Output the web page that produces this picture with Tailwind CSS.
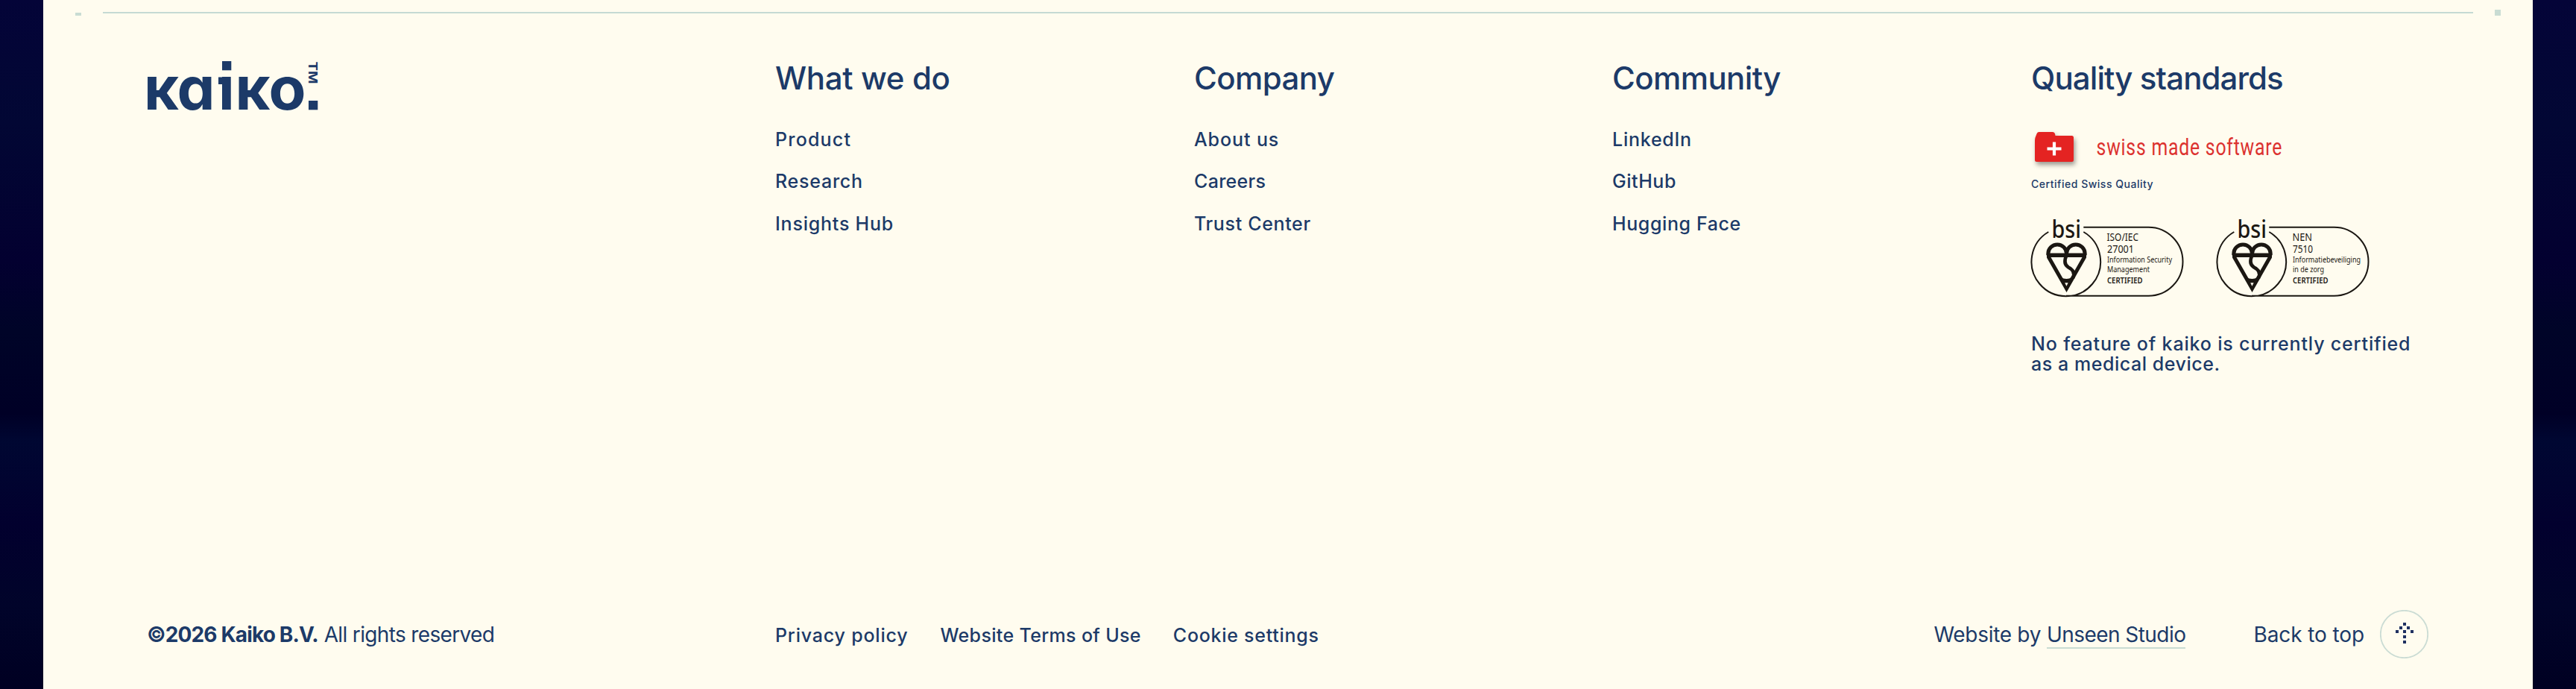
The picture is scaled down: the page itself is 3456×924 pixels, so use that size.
<!DOCTYPE html>
<html lang="en">
<head>
<meta charset="utf-8">
<title>Kaiko</title>
<script src="https://cdn.jsdelivr.net/npm/@tailwindcss/browser@4"></script>
</head>
<body class="h-[924px] w-[3456px] overflow-hidden bg-[linear-gradient(#040438_0%,#020734_18%,#030030_38%,#000428_48%,#000026_60%,#000732_64%,#02002e_76%,#01042a_88%,#000022_100%)] px-[58px] font-['Inter',sans-serif] text-[#1c3a68]">
<footer class="flex h-[924px] flex-col bg-[#fffcef]">
  <div class="flex h-[81px] shrink-0 items-start justify-between pt-[13px] pr-[43px] pl-[43px]">
    <span class="mt-1 h-1 w-2 bg-[#c9dcd3]"></span>
    <span class="mt-[3px] h-[2px] w-[3180px] bg-[#c5dad3]"></span>
    <span class="size-2 bg-[#c9dcd3]"></span>
  </div>

  <div class="grid h-[737px] shrink-0 grid-cols-[842px_562px_561px_562px_1fr] pl-[140px]">
    <div>
      <svg class="block h-[68px] w-[232px] overflow-visible" viewBox="0 0 232 68" fill="#1c3a68" role="img" aria-label="kaiko">
        <g class="text-[80px] font-bold [font-feature-settings:'cv11']">
          <text x="-5" y="66" textLength="47" lengthAdjust="spacingAndGlyphs">к</text>
          <text x="39.500" y="66" textLength="51" lengthAdjust="spacingAndGlyphs">a</text>
          <text x="95" y="66">ı</text>
          <text x="117.500" y="66" textLength="47" lengthAdjust="spacingAndGlyphs">к</text>
          <text x="162.500" y="66" textLength="50" lengthAdjust="spacingAndGlyphs">o</text>
        </g>
        <rect x="100" y="1" width="12.300" height="12.300"/>
        <rect x="95" y="22.500" width="8" height="9.500"/>
        <rect x="216" y="54" width="12.300" height="12.300"/>
        <text class="text-[16.500px] font-bold" transform="translate(216.300 1.500) rotate(90)" textLength="30" lengthAdjust="spacingAndGlyphs">TM</text>
      </svg>
    </div>

    <nav class="flex flex-col">
      <h2 class="h-12 text-[42px] leading-[48px] font-[450] tracking-[-0.350px] whitespace-nowrap">What we do</h2>
      <ul class="mt-[42px] flex flex-col gap-[24.400px] text-[25px] leading-8 font-medium">
        <li><a class="tracking-[1.200px]">Product</a></li>
        <li><a class="tracking-[0.750px]">Research</a></li>
        <li><a class="tracking-[0.780px]">Insights Hub</a></li>
      </ul>
    </nav>
    <nav class="flex flex-col">
      <h2 class="h-12 text-[42px] leading-[48px] font-[450] tracking-[-0.600px] whitespace-nowrap">Company</h2>
      <ul class="mt-[42px] flex flex-col gap-[24.400px] text-[25px] leading-8 font-medium">
        <li><a class="tracking-[0.900px]">About us</a></li>
        <li><a class="tracking-[0.300px]">Careers</a></li>
        <li><a class="tracking-[0.650px]">Trust Center</a></li>
      </ul>
    </nav>
    <nav class="flex flex-col">
      <h2 class="h-12 text-[42px] leading-[48px] font-[450] tracking-[-0.600px] whitespace-nowrap">Community</h2>
      <ul class="mt-[42px] flex flex-col gap-[24.400px] text-[25px] leading-8 font-medium">
        <li><a class="tracking-[0.750px]">LinkedIn</a></li>
        <li><a class="tracking-[0.550px]">GitHub</a></li>
        <li><a class="tracking-[0.600px]">Hugging Face</a></li>
      </ul>
    </nav>
    <section class="flex flex-col">
      <h2 class="h-12 text-[42px] leading-[48px] font-[450] tracking-[-0.900px] whitespace-nowrap">Quality standards</h2>
      <svg class="mt-[42px] block h-[66px] w-[344px] overflow-visible" viewBox="0 0 344 66" role="img" aria-label="swiss made software">
        <path class="drop-shadow-[2px_4px_3px_rgb(0_0_0/0.4)]" d="M7.500 46q-2.500 0-2.500-2.500V17q0-3 1.500-6l1.200-3Q8.500 6 10.500 6H29q2.500 0 3 2.500l.5 2.500H54.500q2.500 0 2.500 2.500v30q0 2.500-2.500 2.500z" fill="#e42322"/>
        <path d="M31 19.500v18M21.500 28.500h19" stroke="#fff" stroke-width="4.200"/>
        <text class="font-['Roboto',sans-serif] text-[31px]" transform="scale(.8 1)" x="109.500" y="37" fill="#dc322f" textLength="311" lengthAdjust="spacing">swiss made software</text>
      </svg>
      <p class="h-5 text-[14px] leading-5 font-medium tracking-[0.520px]">Certified Swiss Quality</p>
      <div class="mt-[35px] -ml-px flex h-[107px] gap-[43px]">
        <svg class="block h-[107px] w-[206px] overflow-visible" viewBox="0 0 206 107" fill="none" stroke="#1b1712">
          <path d="M24.300 19a46.300 46.300 0 1 0 47 0M71.300 12.700H158.500a46 46 0 0 1 0 92H48" stroke-width="2"/>
          <path d="M23.800 50.200V48.300a12.350 12.350 0 0 1 24.700 0a12.350 12.350 0 0 1 24.700 0V50.200M24 52 48.500 95 73 52" stroke-width="5"/>
          <path d="M22 50.200H75" stroke-width="5.500"/>
          <path d="M48.500 44V50C45 58 46 63.500 51 66.500C58 70 60 75 57 81" stroke-width="4.600"/>
          <path d="M36.500 74Q40 82 48.500 82 Q56 82 61 73L48.500 99z" fill="#1b1712" stroke="none"/>
          <path d="M46.200 87.300h4.400l-2.200 4.500z" fill="#fffcef" stroke="none"/>
          <g class="font-['Noto_Sans',sans-serif]" fill="#1b1712" stroke="none">
            <text class="text-[32px] font-medium" x="28.500" y="27.300" textLength="39.500" lengthAdjust="spacingAndGlyphs">bsi</text>
            <text class="text-[14px]" x="102.500" y="31.300" textLength="42.500" lengthAdjust="spacingAndGlyphs">ISO/IEC</text>
            <text class="text-[14px]" x="103" y="47.300" textLength="36" lengthAdjust="spacingAndGlyphs">27001</text>
            <text class="text-[10.300px]" x="103" y="60" textLength="87" lengthAdjust="spacingAndGlyphs">Information Security</text>
            <text class="text-[10.300px]" x="103" y="72.700" textLength="57" lengthAdjust="spacingAndGlyphs">Management</text>
            <text class="text-[10.300px] font-semibold" x="103" y="87.700" textLength="47.500" lengthAdjust="spacingAndGlyphs">CERTIFIED</text>
          </g>
        </svg>
        <svg class="block h-[107px] w-[206px] overflow-visible" viewBox="0 0 206 107" fill="none" stroke="#1b1712">
          <path d="M24.300 19a46.300 46.300 0 1 0 47 0M71.300 12.700H158.500a46 46 0 0 1 0 92H48" stroke-width="2"/>
          <path d="M23.800 50.200V48.300a12.350 12.350 0 0 1 24.700 0a12.350 12.350 0 0 1 24.700 0V50.200M24 52 48.500 95 73 52" stroke-width="5"/>
          <path d="M22 50.200H75" stroke-width="5.500"/>
          <path d="M48.500 44V50C45 58 46 63.500 51 66.500C58 70 60 75 57 81" stroke-width="4.600"/>
          <path d="M36.500 74Q40 82 48.500 82 Q56 82 61 73L48.500 99z" fill="#1b1712" stroke="none"/>
          <path d="M46.200 87.300h4.400l-2.200 4.500z" fill="#fffcef" stroke="none"/>
          <g class="font-['Noto_Sans',sans-serif]" fill="#1b1712" stroke="none">
            <text class="text-[32px] font-medium" x="28.500" y="27.300" textLength="39.500" lengthAdjust="spacingAndGlyphs">bsi</text>
            <text class="text-[14px]" x="102.500" y="31.300" textLength="26.500" lengthAdjust="spacingAndGlyphs">NEN</text>
            <text class="text-[14px]" x="103" y="47.300" textLength="27" lengthAdjust="spacingAndGlyphs">7510</text>
            <text class="text-[10.300px]" x="103" y="60" textLength="91" lengthAdjust="spacingAndGlyphs">Informatiebeveiliging</text>
            <text class="text-[10.300px]" x="103" y="72.700" textLength="42" lengthAdjust="spacingAndGlyphs">in de zorg</text>
            <text class="text-[10.300px] font-semibold" x="103" y="87.700" textLength="47.500" lengthAdjust="spacingAndGlyphs">CERTIFIED</text>
          </g>
        </svg>
      </div>
      <p class="mt-[49px] text-[25px] leading-[27px] font-medium whitespace-nowrap"><span class="tracking-[0.830px]">No feature of kaiko is currently certified</span><br><span class="tracking-[0.550px]">as a medical device.</span></p>
    </section>
  </div>

  <div class="flex h-[65px] shrink-0 items-center pr-[140px] pl-[139px] text-[28px] leading-9 whitespace-nowrap">
    <p class="w-[843px]"><span class="font-bold tracking-[-0.850px]">©2026 Kaiko B.V.</span> <span class="tracking-[-0.650px]">All rights reserved</span></p>
    <div class="flex gap-[43px] pt-[2px] text-[25px] font-medium">
      <a class="tracking-[0.800px]">Privacy policy</a>
      <a class="tracking-[0.340px]">Website Terms of Use</a>
      <a class="tracking-[0.720px]">Cookie settings</a>
    </div>
    <p class="ml-auto"><span class="tracking-[-0.300px]">Website by</span> <a class="border-b-2 border-[#c9dcd3] tracking-[-0.550px]">Unseen Studio</a></p>
    <a class="ml-[91px] flex items-center gap-[21px]"><span class="tracking-[-0.100px]">Back to top</span>
      <svg class="size-[65px]" viewBox="0 0 65 65" fill="#1f3061">
        <circle cx="32.500" cy="32.500" r="31.700" fill="none" stroke="#cbdcd4" stroke-width="1.800"/>
        <path d="M31 17h4v4h-4zM26 22h4v4h-4zM36 22h4v4h-4zM21 27h4v4h-4zM31 27h4v4h-4zM41 27h4v4h-4zM31 34h4v4h-4zM31 41h4v4h-4z"/>
      </svg></a>
  </div>
</footer>
</body>
</html>
